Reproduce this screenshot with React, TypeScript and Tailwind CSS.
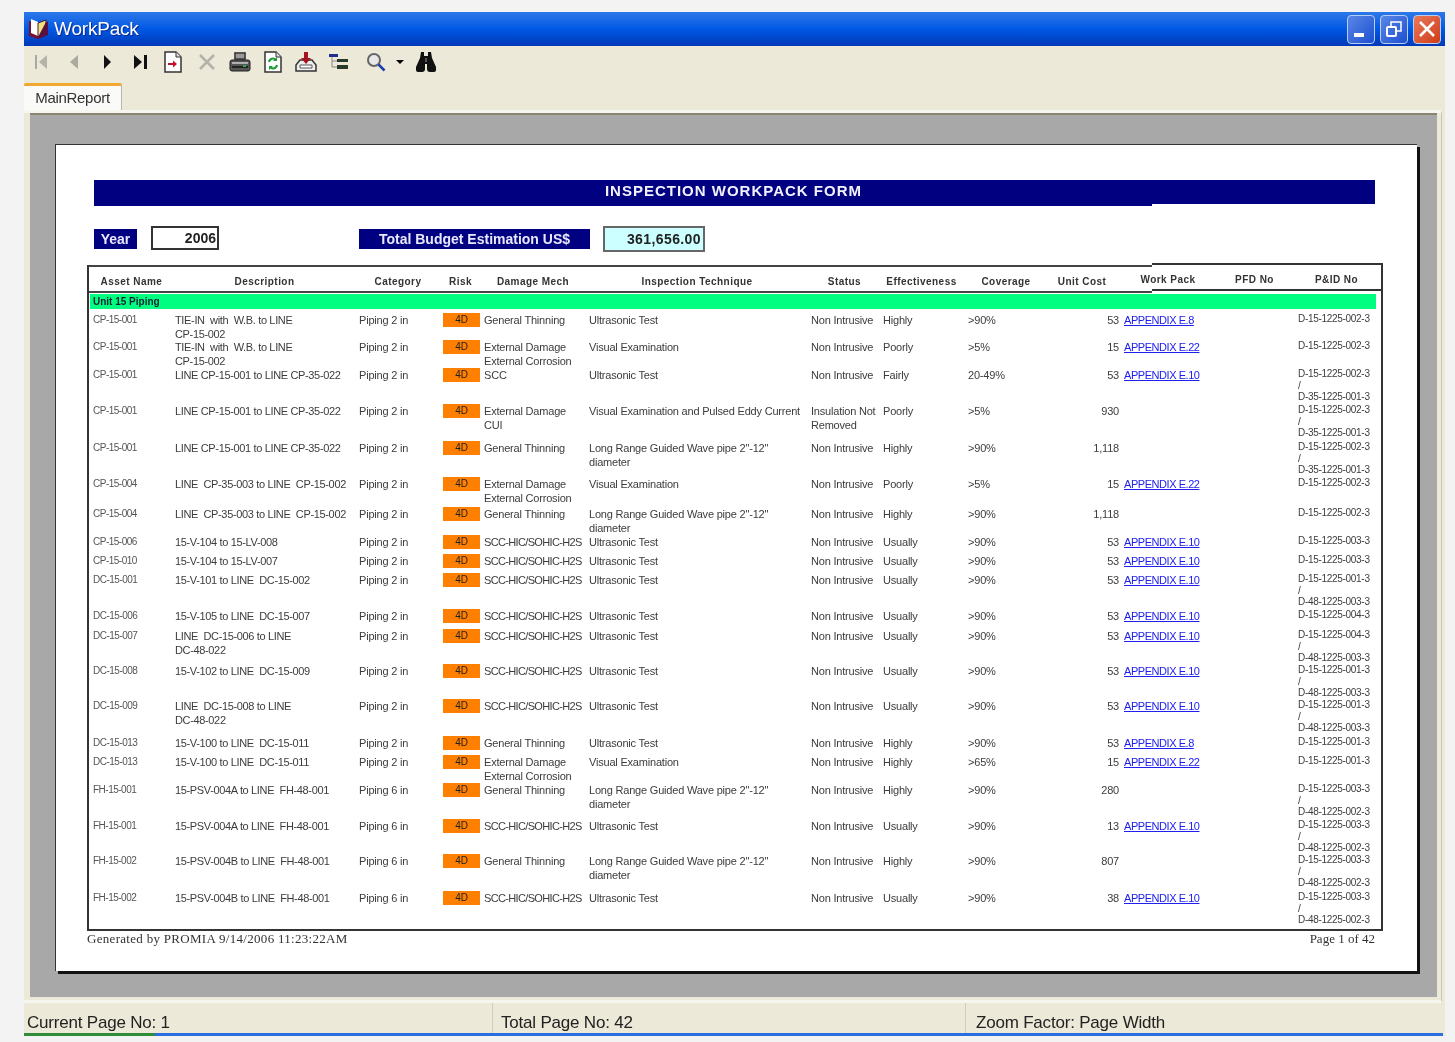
import type { ReactNode } from "react";

type Row = {
  h: string;
  asset: string;
  desc: string;
  cat: string;
  damage: string;
  tech: string;
  status?: string;
  eff: string;
  cov: string;
  cost: string;
  link?: string;
  pid: string;
};

const ut = "Ultrasonic Test";
const ve = "Visual Examination";
const lr = "Long Range Guided Wave pipe 2\"-12\"\ndiameter";
const gt = "General Thinning";
const scc = "SCC-HIC/SOHIC-H2S";
const ext = "External Damage\nExternal Corrosion";
const ni = "Non Intrusive";

const rows: Row[] = [
  { h: "h-[27px]", asset: "CP-15-001", desc: "TIE-IN  with  W.B. to LINE\nCP-15-002", cat: "Piping 2 in", damage: gt, tech: ut, eff: "Highly", cov: ">90%", cost: "53", link: "APPENDIX E.8", pid: "D-15-1225-002-3" },
  { h: "h-[28px]", asset: "CP-15-001", desc: "TIE-IN  with  W.B. to LINE\nCP-15-002", cat: "Piping 2 in", damage: ext, tech: ve, eff: "Poorly", cov: ">5%", cost: "15", link: "APPENDIX E.22", pid: "D-15-1225-002-3" },
  { h: "h-[36px]", asset: "CP-15-001", desc: "LINE CP-15-001 to LINE CP-35-022", cat: "Piping 2 in", damage: "SCC", tech: ut, eff: "Fairly", cov: "20-49%", cost: "53", link: "APPENDIX E.10", pid: "D-15-1225-002-3\n/\nD-35-1225-001-3" },
  { h: "h-[37px]", asset: "CP-15-001", desc: "LINE CP-15-001 to LINE CP-35-022", cat: "Piping 2 in", damage: "External Damage\nCUI", tech: "Visual Examination and Pulsed Eddy Current", status: "Insulation Not\nRemoved", eff: "Poorly", cov: ">5%", cost: "930", pid: "D-15-1225-002-3\n/\nD-35-1225-001-3" },
  { h: "h-[36px]", asset: "CP-15-001", desc: "LINE CP-15-001 to LINE CP-35-022", cat: "Piping 2 in", damage: gt, tech: lr, eff: "Highly", cov: ">90%", cost: "1,118", pid: "D-15-1225-002-3\n/\nD-35-1225-001-3" },
  { h: "h-[30px]", asset: "CP-15-004", desc: "LINE  CP-35-003 to LINE  CP-15-002", cat: "Piping 2 in", damage: ext, tech: ve, eff: "Poorly", cov: ">5%", cost: "15", link: "APPENDIX E.22", pid: "D-15-1225-002-3" },
  { h: "h-[28px]", asset: "CP-15-004", desc: "LINE  CP-35-003 to LINE  CP-15-002", cat: "Piping 2 in", damage: gt, tech: lr, eff: "Highly", cov: ">90%", cost: "1,118", pid: "D-15-1225-002-3" },
  { h: "h-[19px]", asset: "CP-15-006", desc: "15-V-104 to 15-LV-008", cat: "Piping 2 in", damage: scc, tech: ut, eff: "Usually", cov: ">90%", cost: "53", link: "APPENDIX E.10", pid: "D-15-1225-003-3" },
  { h: "h-[19px]", asset: "CP-15-010", desc: "15-V-104 to 15-LV-007", cat: "Piping 2 in", damage: scc, tech: ut, eff: "Usually", cov: ">90%", cost: "53", link: "APPENDIX E.10", pid: "D-15-1225-003-3" },
  { h: "h-[36px]", asset: "DC-15-001", desc: "15-V-101 to LINE  DC-15-002", cat: "Piping 2 in", damage: scc, tech: ut, eff: "Usually", cov: ">90%", cost: "53", link: "APPENDIX E.10", pid: "D-15-1225-001-3\n/\nD-48-1225-003-3" },
  { h: "h-[20px]", asset: "DC-15-006", desc: "15-V-105 to LINE  DC-15-007", cat: "Piping 2 in", damage: scc, tech: ut, eff: "Usually", cov: ">90%", cost: "53", link: "APPENDIX E.10", pid: "D-15-1225-004-3" },
  { h: "h-[35px]", asset: "DC-15-007", desc: "LINE  DC-15-006 to LINE\nDC-48-022", cat: "Piping 2 in", damage: scc, tech: ut, eff: "Usually", cov: ">90%", cost: "53", link: "APPENDIX E.10", pid: "D-15-1225-004-3\n/\nD-48-1225-003-3" },
  { h: "h-[35px]", asset: "DC-15-008", desc: "15-V-102 to LINE  DC-15-009", cat: "Piping 2 in", damage: scc, tech: ut, eff: "Usually", cov: ">90%", cost: "53", link: "APPENDIX E.10", pid: "D-15-1225-001-3\n/\nD-48-1225-003-3" },
  { h: "h-[37px]", asset: "DC-15-009", desc: "LINE  DC-15-008 to LINE\nDC-48-022", cat: "Piping 2 in", damage: scc, tech: ut, eff: "Usually", cov: ">90%", cost: "53", link: "APPENDIX E.10", pid: "D-15-1225-001-3\n/\nD-48-1225-003-3" },
  { h: "h-[19px]", asset: "DC-15-013", desc: "15-V-100 to LINE  DC-15-011", cat: "Piping 2 in", damage: gt, tech: ut, eff: "Highly", cov: ">90%", cost: "53", link: "APPENDIX E.8", pid: "D-15-1225-001-3" },
  { h: "h-[28px]", asset: "DC-15-013", desc: "15-V-100 to LINE  DC-15-011", cat: "Piping 2 in", damage: ext, tech: ve, eff: "Highly", cov: ">65%", cost: "15", link: "APPENDIX E.22", pid: "D-15-1225-001-3" },
  { h: "h-[36px]", asset: "FH-15-001", desc: "15-PSV-004A to LINE  FH-48-001", cat: "Piping 6 in", damage: gt, tech: lr, eff: "Highly", cov: ">90%", cost: "280", pid: "D-15-1225-003-3\n/\nD-48-1225-002-3" },
  { h: "h-[35px]", asset: "FH-15-001", desc: "15-PSV-004A to LINE  FH-48-001", cat: "Piping 6 in", damage: scc, tech: ut, eff: "Usually", cov: ">90%", cost: "13", link: "APPENDIX E.10", pid: "D-15-1225-003-3\n/\nD-48-1225-002-3" },
  { h: "h-[37px]", asset: "FH-15-002", desc: "15-PSV-004B to LINE  FH-48-001", cat: "Piping 6 in", damage: gt, tech: lr, eff: "Highly", cov: ">90%", cost: "807", pid: "D-15-1225-003-3\n/\nD-48-1225-002-3" },
  { h: "h-[38px]", asset: "FH-15-002", desc: "15-PSV-004B to LINE  FH-48-001", cat: "Piping 6 in", damage: scc, tech: ut, eff: "Usually", cov: ">90%", cost: "38", link: "APPENDIX E.10", pid: "D-15-1225-003-3\n/\nD-48-1225-002-3" },
];

function Ico({ children }: { children: ReactNode }) {
  return (
    <svg width="22" height="22" viewBox="0 0 22 22">
      {children}
    </svg>
  );
}

function Printer() {
  return (
    <Ico>
      <path d="M6 2h10v6H6z" fill="#eee" stroke="#222" strokeWidth="1.5" />
      <path d="M7 4h8M7 6h8" stroke="#444" />
      <path d="M3 9h16q2 0 2 2v7q0 2-2 2H3q-2 0-2-2v-7q0-2 2-2z" fill="#555" stroke="#222" />
      <path d="M3 12h16" stroke="#ccc" strokeWidth="1.5" />
      <path d="M3 16h16" stroke="#222" strokeWidth="2" />
      <rect x="14" y="14" width="3" height="2" fill="#2aa84a" />
    </Ico>
  );
}

function Page({ children }: { children: ReactNode }) {
  return (
    <Ico>
      <path d="M3 1h11l5 5v15H3z" fill="#fff" stroke="#333" strokeWidth="1.5" />
      <path d="M14 1v5h5" fill="#ddd" stroke="#333" />
      {children}
    </Ico>
  );
}

function Tool({ children }: { children: ReactNode }) {
  return <div className="flex w-[33.2px] justify-center">{children}</div>;
}

function Toolbar() {
  return (
    <div className="flex h-[36px] shrink-0 items-center pb-[4px]">
      <Tool>
        <Ico>
          <path d="M5 4h2v14H5z" fill="#a9a99f" />
          <path d="M17 4v14l-8-7z" fill="#b3b3a8" />
        </Ico>
      </Tool>
      <Tool>
        <Ico>
          <path d="M15 4v14l-8-7z" fill="#aaaaa0" />
        </Ico>
      </Tool>
      <Tool>
        <Ico>
          <path d="M8 4v14l7-7z" fill="#111" />
        </Ico>
      </Tool>
      <Tool>
        <Ico>
          <path d="M5 4v14l8-7z" fill="#111" />
          <path d="M15 4h3v14h-3z" fill="#111" />
        </Ico>
      </Tool>
      <Tool>
        <Page>
          <path d="M6 13h6" stroke="#c8102e" strokeWidth="2" />
          <path d="M11 9.5l4 3.5-4 3.5z" fill="#c8102e" />
        </Page>
      </Tool>
      <Tool>
        <Ico>
          <path d="M4 4l14 14M18 4L4 18" stroke="#b2b2a8" strokeWidth="2.5" />
        </Ico>
      </Tool>
      <Tool>
        <Printer />
      </Tool>
      <Tool>
        <Page>
          <path d="M7 11a4 4 0 0 1 7-2" fill="none" stroke="#1e9e3a" strokeWidth="2" />
          <path d="M15 6v4h-4z" fill="#1e9e3a" />
          <path d="M15 14a4 4 0 0 1-7 2" fill="none" stroke="#1e9e3a" strokeWidth="2" />
          <path d="M7 19v-4h4z" fill="#1e9e3a" />
        </Page>
      </Tool>
      <Tool>
        <Ico>
          <path d="M1 14l4-5h12l4 5v6H1z" fill="#eee" stroke="#333" strokeWidth="1.5" />
          <path d="M5 14h12v3H5z" fill="#fff" stroke="#555" />
          <path d="M9 1h4v6h3l-5 6-5-6h3z" fill="#a8121e" />
        </Ico>
      </Tool>
      <Tool>
        <Ico>
          <path d="M1 3h9v3H1z" fill="#1c2f8c" />
          <path d="M4 6v10h5M4 10h5" fill="none" stroke="#888" />
          <path d="M9 8h11v3H9zM9 14h11v4H9z" fill="#2a3a2a" />
        </Ico>
      </Tool>
      <div className="flex w-[40px] justify-center">
        <Ico>
          <circle cx="9" cy="9" r="6" fill="#e8e8e8" stroke="#666" strokeWidth="2" />
          <path d="M13.5 13.5l6 6" stroke="#1c3fae" strokeWidth="2.5" />
        </Ico>
      </div>
      <div className="h-0 w-0 border-x-[4px] border-t-[4px] border-x-transparent border-t-black" />
      <div className="ml-[3px] flex w-[38px] justify-center">
        <Ico>
          <path d="M6 1h3v4h4V1h3l1 6 4 9v3q0 2-3 2h-3q-3 0-3-3v-5h-2v5q0 3-3 3H4q-3 0-3-2v-3l4-9z" fill="#111" />
          <path d="M10 7h2v4h-2z" fill="#555" />
        </Ico>
      </div>
    </div>
  );
}

function WinButton({ children, red }: { children: ReactNode; red?: boolean }) {
  return (
    <div
      className={`flex h-[29px] w-[28px] items-center justify-center rounded-[4px] border border-[#b8cdf2] ${
        red ? "bg-linear-to-br from-[#e8795a] to-[#cf3a10]" : "bg-linear-to-br from-[#5a86e6] to-[#1d4fd0]"
      }`}
    >
      {children}
    </div>
  );
}

function ReportRow({ r }: { r: Row }) {
  return (
    <div className={`${r.h} grid grid-cols-[82px_184px_84px_41px_105px_222px_72px_85px_90px_61px_179px_80px] whitespace-pre pl-[4px] text-[11px] leading-[14px] tracking-[-0.2px] text-[#3c3c3c]`}>
      <div className="text-[10px] tracking-[-0.5px] text-[#555]">{r.asset}</div>
      <div className="tracking-[-0.35px]">{r.desc}</div>
      <div>{r.cat}</div>
      <div className="flex h-[14px] w-[37px] items-center justify-center bg-[#ff7f00] text-[10px] text-[#222]">4D</div>
      <div className={r.damage === scc ? "tracking-[-0.65px]" : ""}>{r.damage}</div>
      <div>{r.tech}</div>
      <div>{r.status ?? ni}</div>
      <div>{r.eff}</div>
      <div>{r.cov}</div>
      <div className="text-right">{r.cost}</div>
      <div className="pl-[5px] tracking-[-0.45px] text-[#2020ee] underline">{r.link}</div>
      <div className="text-[10px] leading-[11.5px] tracking-[-0.3px]">{r.pid}</div>
    </div>
  );
}

function HeadCell({ w, children }: { w: string; children: ReactNode }) {
  return <div className={`${w} shrink-0 text-center`}>{children}</div>;
}

export default function App() {
  return (
    <div className="h-[1042px] w-[1455px] overflow-hidden bg-[#f3f3f3] pl-[24px] pt-[12px] font-['Liberation_Sans',sans-serif]">
      <div className="flex h-[1024px] w-[1421px] flex-col bg-[#ece9d8] blur-[0.7px]">
        {/* title bar */}
        <div className="flex h-[34px] shrink-0 items-center justify-between bg-linear-to-b from-[#2c78e8] via-[#0058e4] to-[#0038b8] px-[4px]">
          <div className="flex items-center gap-[5px]">
            <svg width="21" height="22" viewBox="0 0 21 22">
              <path d="M1 3l9 3v15l-9-3z" fill="#7a1030" />
              <path d="M3 1l7 3v14l-7-3z" fill="#fff" />
              <path d="M10 5l8-3v14l-8 3z" fill="#f2e27a" stroke="#3a1a40" />
              <path d="M18 4h2v13l-10 4v-2z" fill="#5a1040" />
            </svg>
            <span className="text-[19px] tracking-[-0.2px] text-white [text-shadow:1px_1px_0_#0a2a90]">WorkPack</span>
          </div>
          <div className="flex gap-[5px]">
            <WinButton>
              <div className="mt-[12px] mr-[4px] h-[4px] w-[10px] bg-white" />
            </WinButton>
            <WinButton>
              <svg width="18" height="18" viewBox="0 0 18 18" fill="none" stroke="#fff" strokeWidth="1.5">
                <rect x="2" y="7" width="9" height="9" rx="1" strokeWidth="2" />
                <path d="M6 6V2h10v9h-4" />
              </svg>
            </WinButton>
            <WinButton red>
              <svg width="18" height="18" viewBox="0 0 18 18" stroke="#fff" strokeWidth="2.5">
                <path d="M2 2l14 14M16 2L2 16" />
              </svg>
            </WinButton>
          </div>
        </div>

        <Toolbar />

        {/* tab */}
        <div className="mt-[1px] flex h-[27px] shrink-0">
          <div className="flex h-[27px] w-[98px] items-center justify-center rounded-t-[2px] border-r border-t-[3px] border-[#b8b6a8] border-t-[#f0a830] bg-[#fafaf8] text-[15px] tracking-[-0.3px] text-[#333]">
            MainReport
          </div>
        </div>

        {/* tab panel */}
        <div className="mr-[3px] h-[893px] shrink-0 border-t-[3px] border-r border-b-[3px] border-[#f6f6f0] border-r-[#c9c7b8] pl-[6px] pr-[4px]">
          <div className="h-[884px] border-t-2 border-t-[#8a8472] bg-[#a8a8a8] pl-[25px] pt-[29px]">
            <div className="h-[827px] w-[1362px] border-t border-l border-[#333] bg-white pl-[32px] pt-[35px] shadow-[3px_3px_0_#111]">
              <div className="pl-[6px]">
                <div className="flex items-start">
                  <div className="flex h-[26px] w-[1058px] shrink-0 items-start justify-end bg-[#000080] text-[15px] font-bold tracking-[1px] text-[#f2f2ff]">
                    <span className="mr-[290px]">INSPECTION WORKPACK FORM</span>
                  </div>
                  <div className="h-[24px] w-[223px] bg-[#000080]" />
                </div>
                <div className="mt-[20px] flex h-[26px] items-start text-[14px] font-bold">
                  <div className="mt-[3px] flex h-[20px] w-[43px] items-center justify-center bg-[#000080] text-[#e8e8ff]">Year</div>
                  <div className="ml-[14px] flex h-[24px] w-[68px] items-center justify-end border-2 border-[#333] pr-[1px] text-[#222]">2006</div>
                  <div className="ml-[140px] mt-[3px] flex h-[20px] w-[231px] items-center justify-center bg-[#000080] text-[#e8e8ff]">Total Budget Estimation US$</div>
                  <div className="ml-[13px] flex h-[26px] w-[102px] items-center justify-end border-2 border-[#666] bg-[#ccffff] pr-[2px] tracking-[0.4px] text-[#222]">361,656.00</div>
                </div>
              </div>
              {/* table: the two header parts sit 2px apart, as in the report */}
              <div className="-ml-[1px] mt-[13px] h-[666px] w-[1296px] border-x-2 border-b-2 border-[#333]">
                <div className="flex items-start whitespace-nowrap text-[10px] font-bold tracking-[0.45px] text-[#333]">
                  <div className="flex h-[28px] w-[1063px] shrink-0 items-center border-y-2 border-[#444] pt-[4px]">
                    <HeadCell w="w-[85px]">Asset Name</HeadCell>
                    <HeadCell w="w-[181px]">Description</HeadCell>
                    <HeadCell w="w-[86px]">Category</HeadCell>
                    <HeadCell w="w-[39px]">Risk</HeadCell>
                    <HeadCell w="w-[106px]">Damage Mech</HeadCell>
                    <HeadCell w="w-[222px]">Inspection Technique</HeadCell>
                    <HeadCell w="w-[73px]">Status</HeadCell>
                    <HeadCell w="w-[81px]">Effectiveness</HeadCell>
                    <HeadCell w="w-[88px]">Coverage</HeadCell>
                    <HeadCell w="w-[64px]">Unit Cost</HeadCell>
                  </div>
                  <div className="-mr-[2px] -mt-[2px] flex h-[28px] flex-1 items-center border-y-2 border-r-2 border-[#333] pt-[4px]">
                    <HeadCell w="w-[60px] -ml-[14px]">Work Pack</HeadCell>
                    <HeadCell w="w-[113px]">PFD No</HeadCell>
                    <HeadCell w="w-[51px]">P&amp;ID No</HeadCell>
                  </div>
                </div>
                <div className="ml-[1px] mt-[1px] flex h-[15px] w-[1286px] items-center bg-[#00ff80] pl-[3px] text-[10px] font-bold leading-none text-[#123]">
                  Unit 15 Piping
                </div>
                <div className="pt-[4px]">
                  {rows.map((r, i) => (
                    <ReportRow key={i} r={r} />
                  ))}
                </div>
              </div>
              <div className="-ml-[1px] flex w-[1288px] justify-between font-['Liberation_Serif',serif] text-[13px] leading-[15px] text-[#333]">
                <span className="tracking-[0.3px]">Generated by PROMIA 9/14/2006 11:23:22AM</span>
                <span>Page 1 of 42</span>
              </div>
            </div>
          </div>
        </div>

        {/* status bar */}
        <div className="flex h-[30px] w-[1420px] shrink-0 items-center text-[17px] tracking-[-0.2px] text-[#222]">
          <div className="flex h-full w-[469px] items-center border-r border-[#d0cdbc] pl-[3px] pt-[10px]">Current Page No: 1</div>
          <div className="flex h-full w-[473px] items-center border-r border-[#d0cdbc] pl-[8px] pt-[10px]">Total Page No: 42</div>
          <div className="flex h-full items-center pl-[10px] pt-[10px]">Zoom Factor: Page Width</div>
        </div>
        <div className="flex h-[3px] w-[1419px] shrink-0">
          <div className="w-[131px] bg-[#2e8b3a]" />
          <div className="flex-1 bg-[#2a6ee0]" />
        </div>
      </div>
    </div>
  );
}
